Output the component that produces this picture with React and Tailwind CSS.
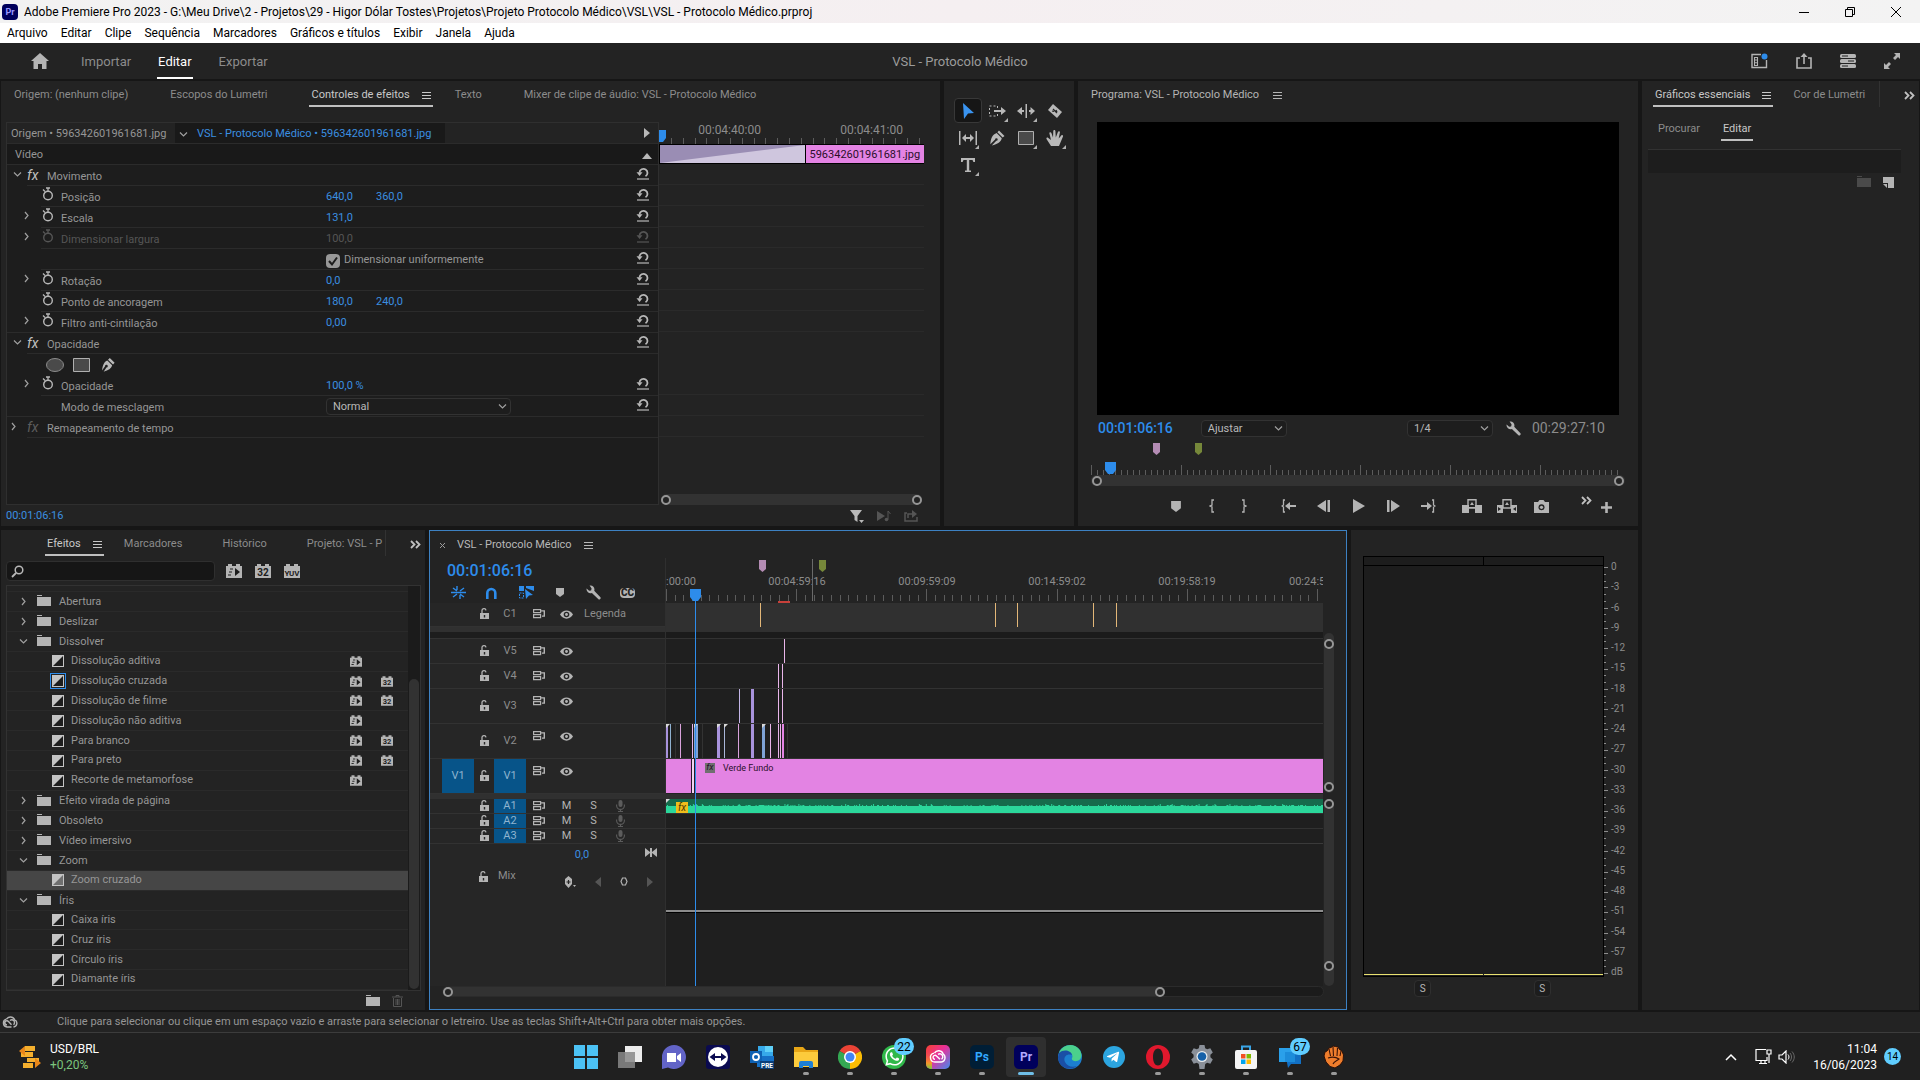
import { useState } from 'react';
import { FaWhatsapp, FaTelegramPlane } from 'react-icons/fa';

const MENUS = ['Arquivo', 'Editar', 'Clipe', 'Sequência', 'Marcadores', 'Gráficos e títulos', 'Exibir', 'Janela', 'Ajuda'];

const EFFECTS = [
  { name: 'Abertura', folder: true },
  { name: 'Deslizar', folder: true },
  { name: 'Dissolver', folder: true, open: true },
  { name: 'Dissolução aditiva', gpu: true },
  { name: 'Dissolução cruzada', gpu: true, b32: true, isDefault: true },
  { name: 'Dissolução de filme', gpu: true, b32: true },
  { name: 'Dissolução não aditiva', gpu: true },
  { name: 'Para branco', gpu: true, b32: true },
  { name: 'Para preto', gpu: true, b32: true },
  { name: 'Recorte de metamorfose', gpu: true },
  { name: 'Efeito virada de página', folder: true },
  { name: 'Obsoleto', folder: true },
  { name: 'Vídeo imersivo', folder: true },
  { name: 'Zoom', folder: true, open: true },
  { name: 'Zoom cruzado', selected: true },
  { name: 'Íris', folder: true, open: true },
  { name: 'Caixa íris' },
  { name: 'Cruz íris' },
  { name: 'Círculo íris' },
  { name: 'Diamante íris' },
];

const PINK = '#e9b5ea';
const LILAC = '#a893dc';
const BLUE = '#7fa3d6';

// clips as [x, width, color] measured from the start of the lane
const VIDEO_TRACKS = [
  { name: 'V5', h: 'h-[25px]', clips: [[118, 1, PINK]] },
  { name: 'V4', h: 'h-[25px]', clips: [[112, 1, PINK], [116, 1, PINK]] },
  { name: 'V3', h: 'h-[35px]', tall: true, clips: [[73, 1, '#c3b5e8'], [85, 3, LILAC], [112, 1, PINK], [116, 1, PINK]] },
  {
    name: 'V2', h: 'h-[35px]', tall: true,
    clips: [
      [0, 2, LILAC], [4, 1, '#8fb0d0'], [9, 1, '#333'], [14, 1, '#d9a2dc'], [26, 1, PINK], [28, 4, BLUE], [36, 1, '#333'],
      [51, 3, LILAC], [58, 1, '#a9b6d8'], [72, 1, '#d9a2dc'], [85, 3, LILAC], [96, 3, BLUE], [104, 1, PINK],
      [112, 1, PINK], [114, 1, PINK], [116, 2, '#e383e3'], [121, 1, '#333'],
    ],
    fades: [0, 28, 51, 58, 96],
  },
];

const FADE = 'fill-[#d8d8d8]';

function Svg({ w = 16, h = 16, box, className = '', children }) {
  return (
    <svg width={w} height={h} viewBox={box || `0 0 ${w} ${h}`} className={`shrink-0 ${className}`} fill="currentColor" aria-hidden="true">
      {children}
    </svg>
  );
}

const Menu = () => (
  <Svg w={9} h={9}><path d="M0 1.500h9M0 4.500h9M0 7.500h9" stroke="currentColor" strokeWidth="1" /></Svg>
);

const Chevron = ({ open }) => (
  <Svg w={9} h={9}>
    <path d={open ? 'M1 2.5l3.5 3.5L8 2.5' : 'M3 1l3 3.5L3 8'} fill="none" stroke="#a0a0a0" strokeWidth="1.2" />
  </Svg>
);

const More = () => (
  <Svg w={11} h={9}><path d="M1 1l3.5 3.5L1 8M6 1l3.5 3.5L6 8" fill="none" stroke="#c0c0c0" strokeWidth="1.8" /></Svg>
);

const Stopwatch = () => (
  <Svg w={12} h={14}>
    <circle cx="6" cy="8.5" r="4.3" fill="none" stroke="currentColor" strokeWidth="1.4" />
    <path d="M4 1h4M6 1v3M1 2.5l2 2" stroke="currentColor" strokeWidth="1.3" />
  </Svg>
);

const Reset = () => (
  <Svg w={14} h={13}>
    <path d="M3.500 5.500A4 4 0 1 1 9.500 9.300" fill="none" stroke="currentColor" strokeWidth="1.800" />
    <path d="M.5 5.200h6L3.600 9z" />
    <path d="M1 12h12" stroke="currentColor" strokeWidth="1.200" />
  </Svg>
);

const Folder = ({ className = 'text-[#b4b4b4]' }) => (
  <Svg w={14} h={12} className={className}><path d="M0 0h5v1H0zM0 2h14v9H0z" /></Svg>
);

const Pen = ({ s = 14 }) => (
  <Svg w={s} h={s} box="0 0 14 14">
    <path d="M8.600.800l4.200 4.200-1.400 1.600L7 2.400zM6.400 3l4.200 4.200c-.8 2.800-3 4.400-7.400 5.600l2.400-3.600a1.200 1.200 0 1 0-1.200-1.200L1.800 11.800C2.400 7 3.600 4 6.400 3z" />
  </Svg>
);

const Wrench = ({ s = 15 }) => (
  <Svg w={s} h={s} box="0 0 15 15">
    <path d="M3.600.600a4 4 0 0 1 4.600 5.200l6 6.300a1.400 1.400 0 0 1-2 2L5.900 8A4 4 0 0 1 .600 3.500l2.500 2.300 2-.4.5-2z" />
  </Svg>
);

const Badge = ({ label, small }) => (
  <Svg w={small ? 12 : 16} h={small ? 11 : 14} box="0 0 16 14" className="text-[#b4b4b4]">
    <path d="M0 2h2V0h4v2h4V0h4v2h2v12H0z" />
    {label ? (
      <text x="8" y="11.500" textAnchor="middle" fontSize={label.length > 2 ? 8 : 10} fontWeight="700" fill="#1d1d1d">{label}</text>
    ) : (
      <path d="M4 5h3M3 8h3M2 11h3" stroke="#1d1d1d" strokeWidth="1.2" fill="none" />
    )}
    {!label && <path d="M9 4l5 4-5 4z" fill="#1d1d1d" />}
  </Svg>
);

const Lock = () => (
  <Svg w={9} h={11}>
    <path d="M0 5h9v6H0z" />
    <path d="M2 5V3a2 2 0 0 1 4-.6" fill="none" stroke="currentColor" strokeWidth="1.3" />
    <path d="M4.500 7v2.500" stroke="#262626" strokeWidth="1.400" />
  </Svg>
);

const Sync = () => (
  <Svg w={13} h={11}>
    <path d="M.6 1.600h7v3h-7zM.6 6.600h7v3h-7z" fill="none" stroke="currentColor" strokeWidth="1.200" />
    <path d="M7 2.200h5v6.600H9V7.500h1.600v-4H7z" />
  </Svg>
);

const Eye = () => (
  <Svg w={13} h={9}>
    <path d="M0 4.500C3-1 10-1 13 4.500 10 10 3 10 0 4.500z" />
    <circle cx="6.500" cy="4.500" r="2.800" fill="#262626" />
    <circle cx="6.500" cy="4.500" r="1.400" />
  </Svg>
);

const Mic = () => (
  <Svg w={9} h={12} className="text-[#5c5c5c]">
    <rect x="2.500" y="0" width="4" height="7" rx="2" />
    <path d="M.600 4.500v1a3.900 3.900 0 0 0 7.800 0v-1M4.500 9v3M2 11.500h5" fill="none" stroke="currentColor" strokeWidth="1.100" />
  </Svg>
);

const Marker = ({ className = '', w = 7, h = 12 }) => (
  <Svg w={w} h={h} box="0 0 7 12" className={className}><path d="M0 0h7v9l-3.500 3L0 9z" /></Svg>
);

const Shield = ({ w = 8, h = 9 }) => (
  <Svg w={w} h={h} box="0 0 8 9"><path d="M0 0h8v6L4 9 0 6z" /></Svg>
);

const Playhead = ({ className = '' }) => (
  <Svg w={11} h={12} className={`text-[#2d8ceb] ${className}`}><path d="M0 0h11v8l-3 4H3L0 8z" /></Svg>
);

const Ring = () => <span className="size-[10px] shrink-0 rounded-full border-2 border-[#969696] bg-[#232323]" />;

function Transition({ selected }) {
  return (
    <Svg w={12} h={12}>
      <path d="M0 0h12v12H0z" fill="#c4c4c4" />
      <path d="M11 1v10H1z" fill={selected ? '#6f6f6f' : '#1d1d1d'} />
    </Svg>
  );
}

function Tab({ children, active, menu }) {
  return (
    <button className={`flex h-[26px] shrink-0 items-center gap-3 whitespace-nowrap border-b-2 pt-1 ${active ? 'border-[#c0c0c0] px-[2px] text-[#c8c8c8]' : 'border-transparent text-[#8c8c8c]'} ${menu ? '-mr-5' : ''}`}>
      {children}
      {menu && <Menu />}
    </button>
  );
}

// ruler ticks, aligned to the bottom edge of the strip
function Ticks({ count, step, every, offset = 0, first = 0, major, minor, h, className = '' }) {
  return (
    <svg height={h} className={`w-full ${className}`} aria-hidden="true">
      {Array.from({ length: count }, (_, i) => {
        const len = (i + offset) % every === 0 ? major : minor;
        return <rect key={i} x={Math.round(first + i * step)} y={h - len} width="1" height={len} fill="#5c5c5c" />;
      })}
    </svg>
  );
}

function Select({ label, value, className }) {
  return (
    <span className={`relative flex items-center ${className}`}>
      <select aria-label={label} defaultValue={value} className="h-[17px] w-full appearance-none rounded-sm border border-[#323232] bg-[#1d1d1d] pl-1.5 text-[11px] leading-none text-[#b8b8b8]">
        <option>{value}</option>
      </select>
      <span className="pointer-events-none absolute right-1"><Chevron open /></span>
    </span>
  );
}

function TitleBar() {
  return (
    <header className="shrink-0 text-xs text-black">
      <div className="flex h-[23px] items-center bg-linear-to-r from-[#f2f2f2] via-[#f5eff1] to-[#f3f3f3] pl-0.5">
        <span className="mr-1.5 flex size-4 items-center justify-center rounded-sm bg-[#00005b] text-[9px] font-bold text-[#9999ff]">Pr</span>
        <h1>Adobe Premiere Pro 2023 - G:\Meu Drive\2 - Projetos\29 - Higor Dólar Tostes\Projetos\Projeto Protocolo Médico\VSL\VSL - Protocolo Médico.prproj</h1>
        <div className="ml-auto flex pr-px">
          <button aria-label="Minimizar" className="flex w-[46px] justify-center"><Svg w={10} h={10}><path d="M0 5h10v1H0z" /></Svg></button>
          <button aria-label="Restaurar" className="flex w-[46px] justify-center">
            <Svg w={10} h={10}><path d="M.5 2.500h7v7h-7zM2.500 2V.5h7v7H8" fill="none" stroke="currentColor" /></Svg>
          </button>
          <button aria-label="Fechar" className="flex w-[46px] justify-center"><Svg w={10} h={10}><path d="M0 0l10 10M10 0L0 10" stroke="currentColor" /></Svg></button>
        </div>
      </div>
      <nav className="flex h-5 items-center gap-[13px] bg-white pl-[7px]">
        {MENUS.map(m => <button key={m}>{m}</button>)}
      </nav>
    </header>
  );
}

function AppHeader() {
  const tab = 'flex h-9 items-center border-b-2 pt-[3px]';
  return (
    <div className="grid h-9 shrink-0 grid-cols-3 items-center bg-[#232323] text-[13px] text-[#8c8c8c]">
      <div className="flex items-center pl-[31px]">
        <button aria-label="Início" className="mr-8 text-[#b4b4b4]">
          <Svg w={18} h={16}><path d="M9 0l9 8h-2.500v8H11v-5H7v5H2.500V8H0z" /></Svg>
        </button>
        <button className={`${tab} border-transparent`}>Importar</button>
        <button className={`${tab} mx-[26px] border-white px-px text-white`}>Editar</button>
        <button className={`${tab} border-transparent`}>Exportar</button>
      </div>
      <p className="pt-px text-center text-[#9c9c9c]">VSL - Protocolo Médico</p>
      <div className="flex items-center justify-end gap-7 pr-5 text-[#b4b4b4]">
        <Svg w={17} h={16}>
          <path d="M15.500 7v7.500H1v-13h9" fill="none" stroke="currentColor" strokeWidth="1.400" />
          <path d="M3.500 4.500h3v8h-3zM3.500 7h3M3.500 9.800h3" fill="none" stroke="currentColor" strokeWidth="1.100" />
          <circle cx="13.500" cy="3.500" r="3" fill="#2d8ceb" />
        </Svg>
        <Svg w={16} h={16}>
          <path d="M4 5H1v10h14V5h-3M8 11V3" fill="none" stroke="currentColor" strokeWidth="1.600" /><path d="M8 0l3.500 4h-7z" />
        </Svg>
        <Svg w={16} h={14}>
          <rect width="16" height="4" rx="1.500" /><rect y="5" width="16" height="4" rx="1.500" /><rect y="10" width="16" height="4" rx="1.500" />
          <path d="M2 2h6M8 7h6M2 12h6" stroke="#232323" strokeWidth="1.200" />
        </Svg>
        <Svg w={16} h={16}>
          <path d="M10 0h6v6l-2-2-3 3-2-2 3-3zM6 16H0v-6l2 2 3-3 2 2-3 3z" />
        </Svg>
      </div>
    </div>
  );
}

const Fx = ({ off }) => <span className={`w-5 text-sm italic ${off ? 'text-[#5c5c5c]' : 'text-[#c0c0c0]'}`}>fx</span>;

function GroupRow({ name, open, off, noReset }) {
  return (
    <div className="flex h-[21px]">
      <span className={`flex w-5 items-center pb-0.5 ${open ? 'justify-center' : 'pl-0.5'}`}><Chevron open={open} /></span>
      <div className="flex flex-1 items-center border-b border-[#2b2b2b] pr-2">
        <Fx off={off} />
        <span className="pt-1">{name}</span>
        {!noReset && <button aria-label={`Redefinir ${name}`} className="ml-auto pb-1 text-[#b8b8b8]"><Reset /></button>}
      </div>
    </div>
  );
}

function PropRow({ name, values = [], chevron, watch = true, disabled, last, children }) {
  return (
    <div className={`flex h-[21px] ${last ? 'border-b border-[#2b2b2b]' : ''} ${disabled ? 'text-[#555]' : ''}`}>
      <span className="flex w-[34px] items-center justify-end pr-2.5 pb-1">{chevron && <Chevron />}</span>
      <div className={`flex flex-1 items-center pr-2 ${last ? '' : 'border-b border-[#2b2b2b]'}`}>
        <span className={`w-5 pb-1 pl-px ${disabled ? '' : 'text-[#b8b8b8]'}`}>{watch && <Stopwatch />}</span>
        <span className="w-[265px] pt-1">{name}</span>
        {values.map(v => (
          <button key={v} className={`w-[50px] pt-[3px] text-left ${disabled ? '' : 'text-[#3b8fe0]'}`}>{v}</button>
        ))}
        {children}
        <button aria-label={`Redefinir ${name}`} className={`ml-auto pb-1 ${disabled ? '' : 'text-[#b8b8b8]'}`}><Reset /></button>
      </div>
    </div>
  );
}

function EffectControls() {
  const [uniform, setUniform] = useState(true);
  return (
    <section className="flex min-h-0 flex-col overflow-hidden bg-[#232323] pl-[5px]">
      <div className="flex gap-[42px] pl-2">
        <Tab>Origem: (nenhum clipe)</Tab>
        <Tab>Escopos do Lumetri</Tab>
        <Tab active menu>Controles de efeitos</Tab>
        <Tab>Texto</Tab>
        <Tab>Mixer de clipe de áudio: VSL - Protocolo Médico</Tab>
      </div>
      <div className="mt-[15px] flex min-h-0 flex-1 pr-4">
        <div className="flex flex-[652_1_0%] flex-col border border-[#2f2f2f] bg-[#1d1d1d]">
          <div className="flex h-[21px] shrink-0 items-center border-b border-[#2b2b2b] bg-[#232323]">
            <button className="w-[168px] whitespace-nowrap pt-0.5 pl-1 text-left">Origem • 596342601961681.jpg</button>
            <button className="flex h-full items-center gap-[9px] bg-[#191919] pt-0.5 pr-3.5 pl-1 text-[#3b8fe0]">
              <Chevron open /><span>VSL - Protocolo Médico • 596342601961681.jpg</span>
            </button>
            <Svg w={6} h={10} className="mr-2 ml-auto text-[#b8b8b8]"><path d="M0 0l6 5-6 5z" /></Svg>
          </div>
          <div className="flex h-[21px] shrink-0 items-center justify-between border-b border-[#2b2b2b] bg-[#191919] pt-[3px] pr-1.5 pl-2">
            Vídeo<Svg w={10} h={6} className="text-[#b8b8b8]"><path d="M5 0l5 6H0z" /></Svg>
          </div>
          <GroupRow name="Movimento" open />
          <PropRow name="Posição" values={['640,0', '360,0']} />
          <PropRow name="Escala" values={['131,0']} chevron />
          <PropRow name="Dimensionar largura" values={['100,0']} chevron disabled />
          <PropRow name="" watch={false}>
            <label className="flex items-center gap-1 pt-[3px]">
              <span className="relative flex">
                <input type="checkbox" checked={uniform} onChange={e => setUniform(e.target.checked)} className="size-[14px] appearance-none rounded-sm bg-[#989898]" />
                {uniform && (
                  <Svg w={14} h={14} className="pointer-events-none absolute inset-0">
                    <path d="M3 7l3 3.500L11 3.500" fill="none" stroke="#1d1d1d" strokeWidth="2" />
                  </Svg>
                )}
              </span>
              Dimensionar uniformemente
            </label>
          </PropRow>
          <PropRow name="Rotação" values={['0,0']} chevron />
          <PropRow name="Ponto de ancoragem" values={['180,0', '240,0']} />
          <PropRow name="Filtro anti-cintilação" values={['0,00']} chevron last />
          <GroupRow name="Opacidade" open />
          <div className="flex h-[21px] items-center gap-[9px] pl-[39px] text-[#b8b8b8]">
            <button aria-label="Máscara elíptica"><Svg w={18} h={14}><ellipse cx="9" cy="7" rx="8.500" ry="6.500" fill="#4a4a4a" stroke="#8c8c8c" /></Svg></button>
            <button aria-label="Máscara retangular"><Svg w={17} h={14}><path d="M.5.5h16v13H.5z" fill="#4a4a4a" stroke="#b0b0b0" /></Svg></button>
            <button aria-label="Máscara livre" className="pl-px"><Pen s={16} /></button>
          </div>
          <PropRow name="Opacidade" values={['100,0 %']} chevron />
          <PropRow name="Modo de mesclagem" watch={false} last>
            <Select label="Modo de mesclagem" value="Normal" className="w-[185px]" />
          </PropRow>
          <GroupRow name="Remapeamento de tempo" off noReset />
        </div>

        <div className="relative flex flex-[266_1_0%] flex-col overflow-hidden">
          <div className="flex h-4 shrink-0 items-end pt-0.5 text-xs leading-4 text-[#8c8c8c]">
            <span className="w-[142px] shrink-0 text-center">00:04:40:00</span>
            <span className="w-[142px] shrink-0 text-center">00:04:41:00</span>
          </div>
          <Ticks count={22} step={11.8} every={12} offset={7} first={12} major={6} minor={6} h={6} className="shrink-0" />
          <span className="absolute top-2 -left-1"><Playhead /></span>
          <div className="flex h-5 shrink-0 gap-px bg-black py-px pl-px">
            <div className="w-[145px] bg-[#9a8db4]">
              <svg className="size-full" viewBox="0 0 145 18" preserveAspectRatio="none"><path d="M0 18L145 0v18z" fill="#cfc6de" /></svg>
            </div>
            <div className="flex flex-1 items-center justify-center bg-[#e383e3] pt-0.5 text-[11px] text-[#2a0f2a]">596342601961681.jpg</div>
          </div>
          <div className="flex-1">
            {Array.from({ length: 13 }, (_, i) => (
              <div key={i} className={`h-[21px] border-b ${i === 8 || i === 9 ? 'border-transparent' : 'border-[#2a2a2a]'}`} />
            ))}
          </div>
          <div className="mx-0.5 flex h-[11px] shrink-0 items-center justify-between rounded-full bg-[#323232]"><Ring /><Ring /></div>
        </div>
      </div>
      <div className="flex h-[21px] shrink-0 items-center justify-between pr-[22px]">
        <button className="pt-0.5 text-[#3b8fe0]">00:01:06:16</button>
        <div className="flex items-center gap-[13px] text-[#555]">
          <Svg w={14} h={14} className="text-[#b8b8b8]"><path d="M0 1h12L7.500 7v6L4.500 11V7zM9 11h5l-2.500 3z" /></Svg>
          <Svg w={14} h={12}><path d="M0 1l8 5-8 5z" /><circle cx="9.500" cy="9.500" r="1.800" /><path d="M11 9.500V1l2.500 3" fill="none" stroke="currentColor" /></Svg>
          <Svg w={14} h={13}><path d="M3 4H1v8h12V8M4 9V5h5" fill="none" stroke="currentColor" strokeWidth="1.500" /><path d="M8 1l5 4-5 4z" /></Svg>
        </div>
      </div>
    </section>
  );
}

const Corner = () => <Svg w={4} h={4} className="absolute right-0.5 bottom-0 text-[#b0b0b0]"><path d="M4 0v4H0z" /></Svg>;

function Tools() {
  const tools = [
    ['Seleção', <path d="M4 1l11 10-6 .5L5 17z" fill="#3a94f0" />],
    ['Selecionar faixa', <><path d="M1.500 4h8v10h-8z" fill="none" stroke="currentColor" strokeDasharray="2 2" /><path d="M6 8h7V5l5 4-5 4v-3H6z" /></>, true],
    ['Ondular', <path d="M8.500 2h1.500v14H8.500zM7 8v2H5v3L0 9l5-4v3zM12 8v2h1.500v3L18 9l-4.500-4v3z" />, true],
    ['Fatiar', <><path d="M7 2l9 8-5 6-9-8z" /><path d="M7 7l4 4M6 9l2 .5M10 8l1 2" stroke="#232323" strokeWidth="1.200" /></>],
    ['Deslizar', <path d="M0 2h1.500v14H0zM16.500 2H18v14h-1.500zM3 9l4-4v3h4V5l4 4-4 4v-3H7v3z" />, true],
    ['Caneta', <path d="M11 1.500l5.500 5.500-1.800 1.600L9.400 3.200zM8.600 4l5.200 5.200c-.8 3.600-4 5.800-10 7.200l4.500-4.600a1.300 1.300 0 1 0-1.200-1.200L2.300 15.200C2.900 9 4.600 5.400 8.600 4z" />],
    ['Retângulo', <path d="M1.500 2.500h15v13h-15z" fill="#4a4a4a" stroke="#b0b0b0" />, true],
    ['Mão', <path d="M5 17l-4.500-7c-.5-1.200.9-2 1.800-1L5 11 3.400 4.500c-.3-1.300 1.500-1.800 2-.5L7 8.500 7.300 2c0-1.500 2-1.500 2.100 0l.4 6.500L11.900 3c.5-1.300 2.200-.8 2 .6L12.700 9.500l2.600-3c.9-1 2.300 0 1.600 1.200L13 17z" />, true],
    ['Texto', <path d="M2 2h14v4h-1.600L13.500 4H10.200v10.500H12V16H6v-1.500h1.800V4H4.500L3.600 6H2z" />, true],
  ];
  return (
    <section className="bg-[#232323] pt-[17px] pl-[10px]">
      <div className="grid w-[116px] grid-cols-4 gap-y-0.5">
        {tools.map(([name, icon, corner], i) => (
          <button key={name} aria-label={name} className={`relative flex h-[25px] w-[28px] items-center justify-center rounded-sm border text-[#b8b8b8] ${i ? 'border-transparent' : 'border-[#383838] bg-[#161616]'}`}>
            <Svg w={18} h={18}>{icon}</Svg>
            {corner && <Corner />}
          </button>
        ))}
      </div>
    </section>
  );
}

function Transport({ label, w = 'w-[35px]', children }) {
  return <button aria-label={label} className={`flex justify-center ${w}`}>{children}</button>;
}

function Program() {
  return (
    <section className="flex min-h-0 flex-col bg-[#232323] px-[13px] text-[#b4b4b4]">
      <div className="flex h-7 items-center gap-3.5 pt-px text-[#b4b4b4]">Programa: VSL - Protocolo Médico <Menu /></div>
      <div className="mx-1.5 mt-[13px] flex-1 bg-black" />
      <div className="mr-5 ml-[7px] flex h-[26px] shrink-0 items-center">
        <button className="text-sm font-medium text-[#2d8ceb]">00:01:06:16</button>
        <Select label="Zoom" value="Ajustar" className="ml-7 w-[86px]" />
        <Select label="Resolução" value="1/4" className="ml-auto w-[86px]" />
        <button aria-label="Configurações" className="mr-[11px] ml-[13px]"><Wrench s={15} /></button>
        <span className="text-sm text-[#8c8c8c]">00:29:27:10</span>
      </div>
      <div className="relative h-[34px] shrink-0">
        <Marker className="absolute top-0.5 left-[62px] text-[#b48cb4]" />
        <Marker className="absolute top-0.5 left-[104px] text-[#76883a]" />
        <Ticks count={89} step={5.98} every={15} major={10} minor={5} h={34} />
        <Playhead className="absolute top-[21px] left-[14px]" />
      </div>
      <div className="flex h-[11px] shrink-0 items-center justify-between rounded-full bg-[#323232] px-px"><Ring /><Ring /></div>
      <div className="flex h-10 shrink-0 items-center pr-[13px] pl-[65px]">
        <Transport label="Adicionar marcador" w="w-10"><Shield w={10} h={11} /></Transport>
        <Transport label="Marcar entrada" w="w-8"><Svg w={6} h={14}><path d="M5 1H3v5L1 7l2 1v5h2" fill="none" stroke="currentColor" strokeWidth="1.300" /></Svg></Transport>
        <Transport label="Marcar saída" w="w-8"><Svg w={6} h={14}><path d="M1 1h2v5l2 1-2 1v5H1" fill="none" stroke="currentColor" strokeWidth="1.300" /></Svg></Transport>
        <div className="ml-[11px] flex items-center">
          <Transport label="Ir para entrada"><Svg w={15} h={14}><path d="M4 1H2.500v5L1 7l1.500 1v5H4" fill="none" stroke="currentColor" strokeWidth="1.300" /><path d="M4 7l5-4v3h6v2H9v3z" /></Svg></Transport>
          <Transport label="Quadro anterior"><Svg w={13} h={12}><path d="M9 0v12L0 6zM10.500 0H13v12h-2.500z" /></Svg></Transport>
          <Transport label="Reproduzir"><Svg w={12} h={14}><path d="M0 0l12 7-12 7z" /></Svg></Transport>
          <Transport label="Próximo quadro"><Svg w={13} h={12}><path d="M4 0v12l9-6zM0 0h2.500v12H0z" /></Svg></Transport>
          <Transport label="Ir para saída"><Svg w={15} h={14}><path d="M11 1h1.500v5L14 7l-1.500 1v5H11" fill="none" stroke="currentColor" strokeWidth="1.300" /><path d="M11 7L6 3v3H0v2h6v3z" /></Svg></Transport>
        </div>
        <div className="ml-2 flex items-center">
          <Transport label="Levantar"><Svg w={20} h={14}><path d="M0 6h7v8H0zM13 6h7v8h-7zM6 8h8v1.500H6z" /><path d="M6 .7h8v8H6z" fill="none" stroke="currentColor" strokeWidth="1.400" /><path d="M10 3l2 3H8z" /></Svg></Transport>
          <Transport label="Extrair"><Svg w={20} h={14}><path d="M0 6h6v8H0zM14 6h6v8h-6z" /><path d="M6 9V.7h8V9z" fill="none" stroke="currentColor" strokeWidth="1.400" /><path d="M10 3l2 3H8z" /><path d="M1 8l3 2-3 2zM19 8l-3 2 3 2z" fill="#232323" /></Svg></Transport>
          <Transport label="Exportar quadro"><Svg w={15} h={13}><path d="M0 2h4l1.500-2h4L11 2h4v11H0z" /><circle cx="7.500" cy="7.300" r="3" fill="#232323" /><circle cx="7.500" cy="7.300" r="1.600" /></Svg></Transport>
        </div>
        <button aria-label="Mais botões" className="ml-auto pb-3"><More /></button>
        <button aria-label="Editor de botões" className="ml-[9px] pt-0.5"><Svg w={11} h={11}><path d="M4.200 0h2.600v4.200H11v2.600H6.800V11H4.200V6.800H0V4.200h4.200z" /></Svg></button>
      </div>
    </section>
  );
}

function EffectRow({ item }) {
  return (
    <li className={`flex h-5 items-center border-b border-[#2a2a2a] ${item.selected ? 'bg-[#464646]' : ''}`}>
      {item.folder ? (
        <button className="flex items-center pl-3">
          <Chevron open={item.open} />
          <span className="mr-2 ml-[9px]"><Folder /></span>
          <span className="pt-0.5">{item.name}</span>
        </button>
      ) : (
        <>
          <span className={`ml-[43px] flex size-4 items-center justify-center border ${item.isDefault ? 'border-[#2d8ceb]' : 'border-transparent'}`}>
            <Transition selected={item.selected} />
          </span>
          <span className="ml-[5px] flex-1">{item.name}</span>
          <span className="w-[31px]">{item.gpu && <Badge small />}</span>
          <span className="w-[27px]">{item.b32 && <Badge small label="32" />}</span>
        </>
      )}
    </li>
  );
}

function Effects() {
  return (
    <section className="flex min-h-0 flex-col overflow-hidden bg-[#232323] pr-1 pl-[5px]">
      <div className="flex items-center pl-[39px]">
        <div className="flex w-[341px] gap-10 overflow-hidden border-r border-[#323232]">
          <Tab active menu>Efeitos</Tab>
          <Tab>Marcadores</Tab>
          <Tab>Histórico</Tab>
          <Tab>Projeto: VSL - P</Tab>
        </div>
        <button aria-label="Mais painéis" className="ml-auto pt-0.5"><More /></button>
      </div>
      <div className="mt-[5px] flex h-5 items-center">
        <label className="flex h-5 w-[209px] items-center rounded-sm border border-[#2f2f2f] bg-[#161616] pl-1">
          <Svg w={13} h={13} className="text-[#b8b8b8]"><circle cx="8" cy="5" r="3.800" fill="none" stroke="currentColor" strokeWidth="1.500" /><path d="M5 8L1 12" stroke="currentColor" strokeWidth="1.800" /></Svg>
          <input type="search" aria-label="Pesquisar efeitos" className="w-full bg-transparent px-1 outline-none" />
        </label>
        <div className="flex gap-[13px] pl-[11px]"><Badge /><Badge label="32" /><Badge label="YUV" /></div>
      </div>
      <div className="mt-1 flex min-h-0 flex-1 overflow-hidden border border-[#323232]">
        <ul className="flex min-w-0 flex-1 flex-col pt-[5px]">
          <li className="h-px shrink-0 bg-[#2a2a2a]" />
          {EFFECTS.map(e => <EffectRow key={e.name} item={e} />)}
        </ul>
        <div className="flex w-[12px] flex-col justify-end bg-[#1b1b1b] p-px"><div className="h-[77%] rounded-full bg-[#323232]" /></div>
      </div>
      <div className="flex h-[19px] shrink-0 items-center justify-end gap-3 pr-[18px]">
        <Folder />
        <Svg w={11} h={12} className="text-[#555]"><path d="M0 2h11M4 2V.5h3V2M1.500 3v8.500h8V3M4 4v6M5.500 4v6M7 4v6" fill="none" stroke="currentColor" /></Svg>
      </div>
    </section>
  );
}

function TrackHead({ name, h, tall, target, source, caption, audio }) {
  return (
    <div className={`flex shrink-0 border-b border-[#323232] pl-3 text-[#8c8c8c] ${h}`}>
      <span className={`flex w-8 items-center justify-center ${source ? 'bg-[#075489] text-[#8fb4d0]' : ''}`}>{source}</span>
      <button aria-label={`Bloquear ${name}`} className="flex w-5 items-center justify-center pb-0.5 text-[#b4b4b4]"><Lock /></button>
      <button className={`flex w-8 items-center justify-center ${target ? 'bg-[#075489] text-[#8fb4d0]' : ''}`}>{name}</button>
      <button aria-label={`Sincronizar ${name}`} className={`flex w-[27px] justify-center text-[#b4b4b4] ${tall ? 'items-start pt-1.5' : 'items-center pb-0.5'}`}><Sync /></button>
      {audio ? (
        <div className="flex items-center text-[11px] text-[#b4b4b4]">
          <button className="w-[27px]">M</button>
          <button className="w-[27px]">S</button>
          <button aria-label="Gravar narração" className="flex w-[27px] justify-center"><Mic /></button>
        </div>
      ) : (
        <button aria-label={`Exibir ${name}`} className={`flex w-[27px] justify-center text-[#b4b4b4] ${tall ? 'items-start pt-2' : 'items-center'}`}><Eye /></button>
      )}
      {caption && <span className="self-center pl-1">{caption}</span>}
    </div>
  );
}

function ClipLane({ track }) {
  return (
    <svg className={`block w-full shrink-0 border-b border-[#323232] ${track.h}`} aria-hidden="true">
      {track.clips.map(([x, w, fill]) => <rect key={x} x={x} y="0" width={w} height="100%" fill={fill} />)}
      {(track.fades || []).map(x => <path key={x} d={`M${x} 0h4l-4 4z`} className={FADE} />)}
    </svg>
  );
}

// audio peaks: repeatable noise, one sample per pixel
const PEAKS = Array.from({ length: 660 }, (_, i) => {
  const n = Math.abs(Math.sin(i * 12.9898) * 43758.5453) % 1;
  return n > 0.97 ? 5 : n > 0.7 ? 6 : 7;
});
const WAVE = `M0 14${PEAKS.map((p, i) => `L${i} ${p}L${i + 1} ${p}`).join('')}L660 14z`;

function VScroll({ className, children }) {
  return <div className={`flex flex-col justify-between rounded-full bg-[#323232] ${className}`}>{children}</div>;
}

function Timeline() {
  const labels = ['00:04:59:16', '00:09:59:09', '00:14:59:02', '00:19:58:19'];
  return (
    <section className="flex min-h-0 flex-col overflow-hidden border border-[#3d81c2] bg-[#232323] pr-3">
      <div className="flex h-[27px] shrink-0 items-center gap-3 pt-px pl-[10px] text-[#b8b8b8]">
        <button aria-label="Fechar sequência"><Svg w={5} h={5}><path d="M0 0l5 5M5 0L0 5" stroke="#9c9c9c" /></Svg></button>
        VSL - Protocolo Médico
        <Menu />
      </div>
      <div className="flex min-h-0 flex-1">
        {/* track headers */}
        <div className="flex w-[236px] shrink-0 flex-col border-r border-[#2f2f2f] bg-[#262626]">
          <div className="flex h-[45px] shrink-0 flex-col justify-between bg-[#232323]">
            <button className="h-6 self-start pt-px pl-[17px] text-base font-medium text-[#2d8ceb]">00:01:06:16</button>
            <div className="flex items-center pb-[3px] pl-[21px] text-[#b4b4b4]">
              <button aria-label="Inserir como aninhado" className="w-[34px] text-[#2d8ceb]">
                <Svg w={15} h={13}><path d="M0 6.500h15M2 2l4 3M13 2L9 5M2 11l4-3M13 11L9 8M6 0v4M9 13V9" fill="none" stroke="currentColor" strokeWidth="1.400" /></Svg>
              </button>
              <button aria-label="Encaixar" className="w-[34px] text-[#2d8ceb]">
                <Svg w={13} h={12}><path d="M2.300 12V6a4 4 0 0 1 8 0v6" fill="none" stroke="currentColor" strokeWidth="2.600" /></Svg>
              </button>
              <button aria-label="Seleção vinculada" className="w-[37px] text-[#2d8ceb]">
                <Svg w={15} h={13}><path d="M0 0h5v5H0zM7 0h8v5L7 2zM6 3l8 6-4 .5L7 13z" /><path d="M.5 7h4v5h-4z" fill="none" stroke="currentColor" strokeDasharray="2 1" /></Svg>
              </button>
              <button aria-label="Adicionar marcador" className="w-[30px]"><Shield /></button>
              <button aria-label="Configurações da linha do tempo" className="w-[34px]"><Wrench /></button>
              <button aria-label="Legendas" className="rounded-sm bg-[#b4b4b4] px-px text-[10px] leading-[10px] font-black text-[#232323]">CC</button>
            </div>
          </div>
          <TrackHead name="C1" h="h-6" caption="Legenda" />
          <div className="h-[5px] shrink-0 bg-[#303030]" />
          <div className="h-[7px] shrink-0 border-b border-[#323232] bg-[#1d1d1d]" />
          {VIDEO_TRACKS.map(t => <TrackHead key={t.name} name={t.name} h={t.h} tall={t.tall} />)}
          <TrackHead name="V1" h="h-[35px]" tall target source="V1" />
          <div className="h-[5px] shrink-0 bg-[#303030]" />
          {['A1', 'A2', 'A3'].map(a => <TrackHead key={a} name={a} h="h-[15px]" target audio />)}
          <div className="flex min-h-0 flex-1 items-start pt-0.5 pl-[49px] text-[#b4b4b4]">
            <span className="flex items-center gap-2.5 pt-[22px] text-[#8c8c8c]"><span className="text-[#b4b4b4]"><Lock /></span>Mix</span>
            <div className="ml-[47px] flex flex-1 flex-col gap-3 pr-2">
              <div className="flex items-start justify-between pl-3">
                <button className="pt-px text-[#3b8fe0]">0,0</button>
                <Svg w={12} h={9} className="mt-0.5"><path d="M0 0l5 4V0h2v4l5-4v9L7 5v4H5V5L0 9z" /></Svg>
              </div>
              <div className="flex items-center justify-between pr-1 pl-px">
                <Svg w={12} h={12}><path d="M4.500 0L8 3v5l-3.500 4L1 8V3zM9 9h3l-1.500 2z" /><path d="M2.500 6h4M4.500 4v4" stroke="#262626" strokeWidth="1.200" /></Svg>
                <Svg w={6} h={10} className="text-[#555]"><path d="M6 0v10L0 5z" /></Svg>
                <Svg w={8} h={9}><path d="M2.500 1h3L7 4.500 5.500 8h-3L1 4.500z" fill="none" stroke="currentColor" strokeWidth="1.200" /></Svg>
                <Svg w={6} h={10} className="text-[#555]"><path d="M0 0l6 5-6 5z" /></Svg>
              </div>
            </div>
          </div>
        </div>

        {/* lanes */}
        <div className="relative flex min-w-0 flex-1 flex-col overflow-hidden bg-[#1f1f1f]">
          <div className="relative h-[45px] shrink-0 bg-[#232323]">
            <div className="flex pt-4 text-[11px] leading-4 text-[#8c8c8c]">
              <span className="w-[66px] shrink-0">:00:00</span>
              {labels.map(l => <span key={l} className="w-[130px] shrink-0 text-center">{l}</span>)}
              <span className="shrink-0 pl-[37px]">00:24:5</span>
            </div>
            <Ticks count={77} step={8.68} every={15} major={12} minor={6} h={12} className="absolute bottom-0.5 left-0" />
            <Marker className="absolute top-0.5 left-[93px] text-[#b48cb4]" />
            <Marker className="absolute top-0.5 left-[153px] text-[#76883a]" />
            <span className="absolute top-px left-[146px] h-[42px] w-px bg-[#6a6a6a]" />
            <span className="absolute bottom-0 left-[112px] h-0.5 w-3 bg-[#c8403a]" />
          </div>
          <svg className="block h-[29px] w-full shrink-0 bg-[#303030]" aria-hidden="true">
            {[94, 329, 351, 427, 450].map(x => <rect key={x} x={x} y="0" width="1" height="24" fill="#e3b778" />)}
          </svg>
          <div className="h-[7px] shrink-0 border-b border-[#323232] bg-[#1b1b1b]" />
          {VIDEO_TRACKS.map(t => <ClipLane key={t.name} track={t} />)}
          <div className="flex h-[35px] shrink-0 border-b border-[#232323] bg-[#e383e3] text-[9px] text-[#2a0f2a]">
            <span className="w-[26px] border-r border-[#2a1a2a]" />
            <span className="w-[3px] border-r border-[#2a1a2a] bg-[#f2d4f2]" />
            <span className="mt-1 ml-[10px] flex h-[10px] w-[10px] items-center justify-center bg-[#6f6f6f] italic">fx</span>
            <span className="mt-[3px] ml-2">Verde Fundo</span>
          </div>
          <div className="h-[5px] shrink-0 bg-[#303030]" />
          <div className="relative h-[15px] shrink-0 border-b border-[#323232] bg-[#166b4c]">
            <svg className="block size-full" viewBox="0 0 660 14" preserveAspectRatio="none"><path d={WAVE} fill="#2bd79b" /><path d="M0 0h4L0 4z" className={FADE} /></svg>
            <span className="absolute bottom-0 left-[10px] flex h-[11px] w-3 items-center justify-center bg-[#f0bd1c] text-[10px] text-[#4a3800] italic">fx</span>
          </div>
          <div className="h-[15px] shrink-0 border-b border-[#323232]" />
          <div className="h-[15px] shrink-0 border-b border-[#3a3a3a]" />
          <div className="flex min-h-0 flex-1 flex-col pt-[66px]"><div className="h-[3px] border-b border-black bg-[#8c8c8c]" /></div>
          <Playhead className="absolute top-[31px] left-[24px]" />
          <span className="absolute top-[42px] bottom-0 left-[29px] w-px bg-[#2d8ceb]" />
        </div>

        <div className="flex w-[11px] shrink-0 flex-col pt-[75px] pl-px">
          <VScroll className="h-[160px] pt-1.5 pb-px"><Ring /><Ring /></VScroll>
          <VScroll className="mt-1.5 min-h-0 flex-1 pb-[15px]"><Ring /><Ring /></VScroll>
        </div>
      </div>
      <div className="mr-2.5 ml-3 flex h-[11px] shrink-0 rounded-full border border-[#2b2b2b] bg-[#1b1b1b]">
        <div className="flex w-[82%] items-center justify-between rounded-full bg-[#323232]"><Ring /><Ring /></div>
      </div>
      <div className="h-3 shrink-0" />
    </section>
  );
}

function Meters() {
  const marks = Array.from({ length: 21 }, (_, i) => (i === 20 ? 'dB' : String(i * -3)));
  return (
    <section className="flex min-h-0 flex-col bg-[#232323] pt-[26px] pl-3">
      <div className="flex min-h-0 flex-1">
        <div className="flex flex-1 flex-col border border-black bg-[#1d1d1d]">
          <div className="grid h-[9px] grid-cols-2 divide-x divide-black border-b border-black"><span /><span /></div>
          <div className="mt-auto mb-px grid h-px grid-cols-2 gap-px"><span className="bg-[#e8e070]" /><span className="bg-[#e8e070]" /></div>
        </div>
        <svg className="mt-[11px] mb-[3px] w-1" viewBox="0 0 4 407" preserveAspectRatio="none" aria-hidden="true">
          {Array.from({ length: 61 }, (_, i) => (
            <rect key={i} x="0" y={Math.round(i * 6.77)} width={i % 3 ? 2 : 4} height="1" fill="#8c8c8c" />
          ))}
        </svg>
        <div className="-mb-0.5 flex w-[30px] flex-col justify-between pt-1 pl-[3px] text-[10px] leading-[14px] text-[#8c8c8c]">
          {marks.map(m => <span key={m}>{m}</span>)}
        </div>
      </div>
      <div className="mr-9 grid h-[33px] shrink-0 grid-cols-2 justify-items-center pt-[3px]">
        {['Solo esquerdo', 'Solo direito'].map(l => (
          <button key={l} aria-label={l} className="size-[17px] rounded-sm border border-[#2f2f2f] bg-[#1d1d1d] text-[10px] leading-none text-[#b8b8b8]">S</button>
        ))}
      </div>
    </section>
  );
}

function EssentialGraphics() {
  return (
    <aside className="w-[277px] shrink-0 bg-[#232323]">
      <div className="flex items-center pr-1 pl-[11px]">
        <div className="flex flex-1 gap-10 border-r border-[#323232]">
          <Tab active menu>Gráficos essenciais</Tab>
          <Tab>Cor de Lumetri</Tab>
        </div>
        <button aria-label="Mais painéis" className="pt-0.5 pl-6"><More /></button>
      </div>
      <div className="mt-2 flex gap-[21px] pl-4">
        <Tab>Procurar</Tab>
        <Tab active>Editar</Tab>
      </div>
      <div className="mr-[18px] ml-1.5 mt-2 h-6 border-t border-[#323232] bg-[#1d1d1d]" />
      <div className="mr-[25px] flex h-[18px] items-center justify-end gap-3">
        <Folder className="text-[#4a4a4a]" />
        <Svg w={11} h={11} className="text-[#b4b4b4]"><path d="M0 0h11v11H5V6H0z" /><path d="M0 7h4v4z" /></Svg>
      </div>
    </aside>
  );
}

const AdobeIcon = ({ bg, fg, text }) => (
  <span className={`flex size-6 items-center justify-center rounded-[5px] text-xs font-bold ${bg} ${fg}`}>{text}</span>
);

const TASKS = [
  ['Iniciar', <Svg w={24} h={24}><path d="M0 0h11v11H0zM13 0h11v11H13zM0 13h11v11H0zM13 13h11v11H13z" fill="#4cc2f5" /></Svg>],
  ['Visão de tarefas', <Svg w={24} h={24}><path d="M7 1h17v16H7z" fill="#ececec" /><path d="M0 7h17v16H0z" fill="#8a8a8a" fillOpacity=".85" /></Svg>],
  ['Chat', <Svg w={24} h={24}><path d="M12 0a12 12 0 1 1-6 22.400L0 24V12A12 12 0 0 1 12 0z" fill="#6264c7" /><path d="M5 8h9v9H5zM15 11l4-3v9l-4-3z" fill="#fff" /></Svg>],
  ['TeamViewer', <Svg w={24} h={24}><rect width="24" height="24" rx="3" fill="#0a0a50" /><circle cx="12" cy="12" r="10" fill="#fff" /><path d="M3.500 12L9 8v3h6V8l5.500 4L15 16v-3H9v3z" fill="#0a0a50" /></Svg>],
  ['Outlook', <Svg w={24} h={24}><path d="M8 1h15v12H8z" fill="#36a9ea" /><path d="M15 1h8v6h-8z" fill="#5fd0f8" /><path d="M7 11h17v11H7z" fill="#1670c6" /><path d="M0 6h12v12H0z" fill="#0f62b4" /><circle cx="6" cy="12" r="3" fill="none" stroke="#fff" strokeWidth="1.800" /><path d="M10 16h14v8H10z" fill="#0b3f79" /><text x="17" y="22.500" textAnchor="middle" fontSize="6.500" fontWeight="700" fill="#fff">PRE</text></Svg>],
  ['Explorador', <Svg w={24} h={24}><path d="M0 2h9l3 3h12v17H0z" fill="#e8a616" /><path d="M0 7h24v15H0z" fill="#fccb3c" /><path d="M5 23v-5a2 2 0 0 1 2-2h10a2 2 0 0 1 2 2v5h-4v-2H9v2z" fill="#1f7fd4" /></Svg>, true],
  ['Chrome', <Svg w={24} h={24}><path d="M12 12L1.600 6A12 12 0 0 1 22.400 6z" fill="#ea4335" /><path d="M12 12L22.400 6A12 12 0 0 1 12 24z" fill="#fbbc04" /><path d="M12 12V24A12 12 0 0 1 1.600 6z" fill="#34a853" /><circle cx="12" cy="12" r="6" fill="#fff" /><circle cx="12" cy="12" r="4.500" fill="#4285f4" /></Svg>, true],
  ['WhatsApp', <span className="flex size-6 items-center justify-center rounded-full bg-[#30b84a] text-[21px] text-white"><FaWhatsapp /></span>, true, '22'],
  [
    'Creative Cloud',
    <Svg w={24} h={24}>
      <defs>
        <linearGradient id="cc" x1="0" y1="0" x2="1" y2="1">
          <stop offset="0" stopColor="#f7422e" /><stop offset=".45" stopColor="#e8309a" /><stop offset="1" stopColor="#3f8cf0" />
        </linearGradient>
        <linearGradient id="cc2" x1="0" y1="0" x2="0" y2="1">
          <stop offset="0" stopColor="#f7422e" stopOpacity="0" /><stop offset=".7" stopColor="#f9a01e" stopOpacity=".9" /><stop offset="1" stopColor="#6fd043" />
        </linearGradient>
      </defs>
      <rect width="24" height="24" rx="5" fill="url(#cc)" />
      <path d="M0 4h6v20H5a5 5 0 0 1-5-5z" fill="url(#cc2)" />
      <path d="M15.500 17H9a4.500 4.500 0 0 1-1-8.900M9 14.300a2 2 0 1 1 1.500-3.400L14 14.300M8.500 8a4.900 4.900 0 0 1 8.700 1A4.500 4.500 0 0 1 15.500 17M12 9.400a2.600 2.600 0 1 1 3.500 4.900" fill="none" stroke="#fff" strokeWidth="1.400" />
    </Svg>,
    true,
  ],
  ['Photoshop', <AdobeIcon bg="bg-[#001e36]" fg="text-[#31a8ff]" text="Ps" />, true],
  ['Premiere Pro', <AdobeIcon bg="bg-[#00005b]" fg="text-[#b3a8ff]" text="Pr" />, 'active'],
  ['Edge', <Svg w={24} h={24}><circle cx="12" cy="12" r="12" fill="#1c7fd0" /><path d="M1 8C4 0 15-3 21 4c4 5 3 11-2 12-3 .6-6-1-5-3 1.500-3-1-6-5-6-3 0-6 1.500-8 5z" fill="#4bd08c" /><path d="M1 8c4-4 12-3 13 2-6-2-9 3-7 7 2 4 7 6 12 4-8 6-19 1-19-9z" fill="#1a4fa6" /></Svg>],
  ['Telegram', <span className="flex size-[22px] items-center justify-center rounded-full bg-[#2ca5e0] pr-0.5 text-sm text-white"><FaTelegramPlane /></span>],
  ['Opera', <Svg w={24} h={24}><path fillRule="evenodd" d="M12 0a12 12 0 1 0 0 24 12 12 0 0 0 0-24zm0 3.500c3 0 5 3.500 5 8.500s-2 8.500-5 8.500S7 17 7 12s2-8.500 5-8.500z" fill="#e0182d" /></Svg>, true],
  ['Configurações', <Svg w={24} h={24}><path d="M9.500 0h5l.7 3.200 2 1.100L20.300 3.300l2.500 4.300-2.400 2.200v2.400l2.400 2.200-2.500 4.300-3.100-1-2 1.200-.7 5h-5l-.7-5-2-1.200-3.100 1L1.200 14.400l2.400-2.200V9.800L1.200 7.600l2.500-4.300 3.100 1 2-1.100z" fill="#8a9099" /><circle cx="12" cy="11.500" r="5.500" fill="#e8ecef" /><circle cx="12" cy="11.500" r="4.300" fill="#1560a8" /></Svg>, true],
  ['Microsoft Store', <Svg w={24} h={24}><path d="M8 6V1.500h8V6" fill="none" stroke="#3aa6e8" strokeWidth="2" /><rect x="1" y="5" width="22" height="19" rx="2" fill="#f5f5f5" /><path d="M7 9h4.500v4.500H7z" fill="#f25022" /><path d="M12.500 9H17v4.500h-4.500z" fill="#7fba00" /><path d="M7 14.500h4.500V19H7z" fill="#00a4ef" /><path d="M12.500 14.500H17V19h-4.500z" fill="#ffb900" /></Svg>, true],
  ['Vincular ao Celular', <Svg w={24} h={24}><path d="M1 3h16v14H1z" fill="#2aa0ea" /><path d="M7 7h16v12H13l-3 4z" fill="#1270c4" /><path d="M7 7h10v10H7z" fill="#1c8cda" /></Svg>, true, '67'],
  ['Punho', <Svg w={24} h={24}><path d="M2 11l1-4 2-1 2-3 2-.5L11 1l2.500.5L16 2l1.500 2.500L20 6l1.500 4-.5 6-3 4-5 3-5-1.500L4 17z" fill="#ee7d2c" stroke="#2a1008" /><path d="M7 4l1.500 7M11 2l.5 9M15.500 3L15 11M19 6l-1 5M6 13c3-1 8-1 11 1-2 2-5 2-6 5" fill="none" stroke="#3a1408" strokeWidth="1.100" /></Svg>, true],
];

function Taskbar() {
  return (
    <footer className="grid h-12 shrink-0 grid-cols-[1fr_auto_1fr] items-center border-t border-[#3c3c3c] bg-[#202020] text-xs text-white">
      <button className="flex items-center gap-2 justify-self-start pl-[18px] text-left leading-4">
        <Svg w={24} h={24}>
          <path d="M7 1h10v5H7zM3 7h12v5H3zM9 13h12v4H9zM5 18h10v5H5z" fill="#f5b02e" />
          <path d="M1 6L7 1v10zM23 18l-6 5V13z" fill="#e8871a" />
        </Svg>
        <span>USD/BRL<br /><span className="text-[#7bc67e]">+0,20%</span></span>
      </button>
      <div className="flex">
        {TASKS.map(([name, icon, running, count]) => (
          <button key={name} aria-label={name} className="relative flex h-[47px] w-11 items-center justify-center">
            <span className={`flex h-10 w-10 items-center justify-center rounded-sm ${running === 'active' ? 'bg-[#2f2f2f]' : ''}`}>{icon}</span>
            {running && <span className={`absolute bottom-[5px] h-[3px] rounded-full ${running === 'active' ? 'w-4 bg-[#6fbfe8]' : 'w-1.5 bg-[#9a9a9a]'}`} />}
            {count && <span className="absolute top-[5px] right-0.5 flex h-[17px] w-5 items-center justify-center rounded-full bg-[#60cdff] text-black">{count}</span>}
          </button>
        ))}
      </div>
      <div className="flex items-center justify-self-end pr-[19px]">
        <Svg w={12} h={8} className="mr-[18px]"><path d="M1 7l5-5 5 5" fill="none" stroke="currentColor" strokeWidth="1.500" /></Svg>
        <Svg w={17} h={17} className="mr-1.5"><path d="M11 1.500H1v11h11V9M4 15.500h8M6 13v2.500M10 13v2.500M12 2h4v4h-4zM14 6v9" fill="none" stroke="currentColor" strokeWidth="1.200" /></Svg>
        <Svg w={17} h={14} className="mr-[18px]"><path d="M1 5h3l4-4v12L4 9H1z" fill="none" stroke="currentColor" strokeWidth="1.200" /><path d="M10 4.500c1.300 1.500 1.300 3.500 0 5" fill="none" stroke="currentColor" /><path d="M12 3c2 2.500 2 5.500 0 8M14 1.500c3 3.500 3 7.500 0 11" fill="none" stroke="#6a6a6a" /></Svg>
        <time className="text-right leading-4">11:04<br />16/06/2023</time>
        <span className="ml-[7px] flex size-[17px] items-center justify-center rounded-full bg-[#60cdff] text-[10px] text-black">14</span>
      </div>
    </footer>
  );
}

export default function App() {
  return (
    <div className="flex h-screen flex-col overflow-hidden bg-[#161616] font-[Roboto,'Noto_Sans',sans-serif] text-[11px] text-[#969696]">
      <TitleBar />
      <AppHeader />
      <main className="flex min-h-0 flex-1 gap-1 px-px py-0.5">
        <div className="grid min-h-0 min-w-0 flex-1 grid-rows-[minmax(0,445fr)_minmax(0,480fr)] gap-1">
          <div className="grid min-h-0 grid-cols-[939fr_130fr_560fr] gap-1">
            <EffectControls />
            <Tools />
            <Program />
          </div>
          <div className="grid min-h-0 grid-cols-[424fr_918fr_287fr] gap-1">
            <Effects />
            <Timeline />
            <Meters />
          </div>
        </div>
        <EssentialGraphics />
      </main>
      <div className="flex h-5 shrink-0 items-center gap-[39px] bg-[#232323] pl-0.5">
        <Svg w={16} h={12} className="text-[#b4b4b4]">
          <path d="M9.500 11H5A4 4 0 0 1 4.300 3.200M5 8.800a2 2 0 1 1 1.500-3.200L9.500 8.800M4.500 3.200a4.600 4.600 0 0 1 8.200.6A3.800 3.800 0 0 1 11.500 11M8 4.500a2.400 2.400 0 1 1 3.500 4.300" fill="none" stroke="currentColor" strokeWidth="1.400" />
        </Svg>
        <span className="pt-px">Clique para selecionar ou clique em um espaço vazio e arraste para selecionar o letreiro. Use as teclas Shift+Alt+Ctrl para obter mais opções.</span>
      </div>
      <Taskbar />
    </div>
  );
}
